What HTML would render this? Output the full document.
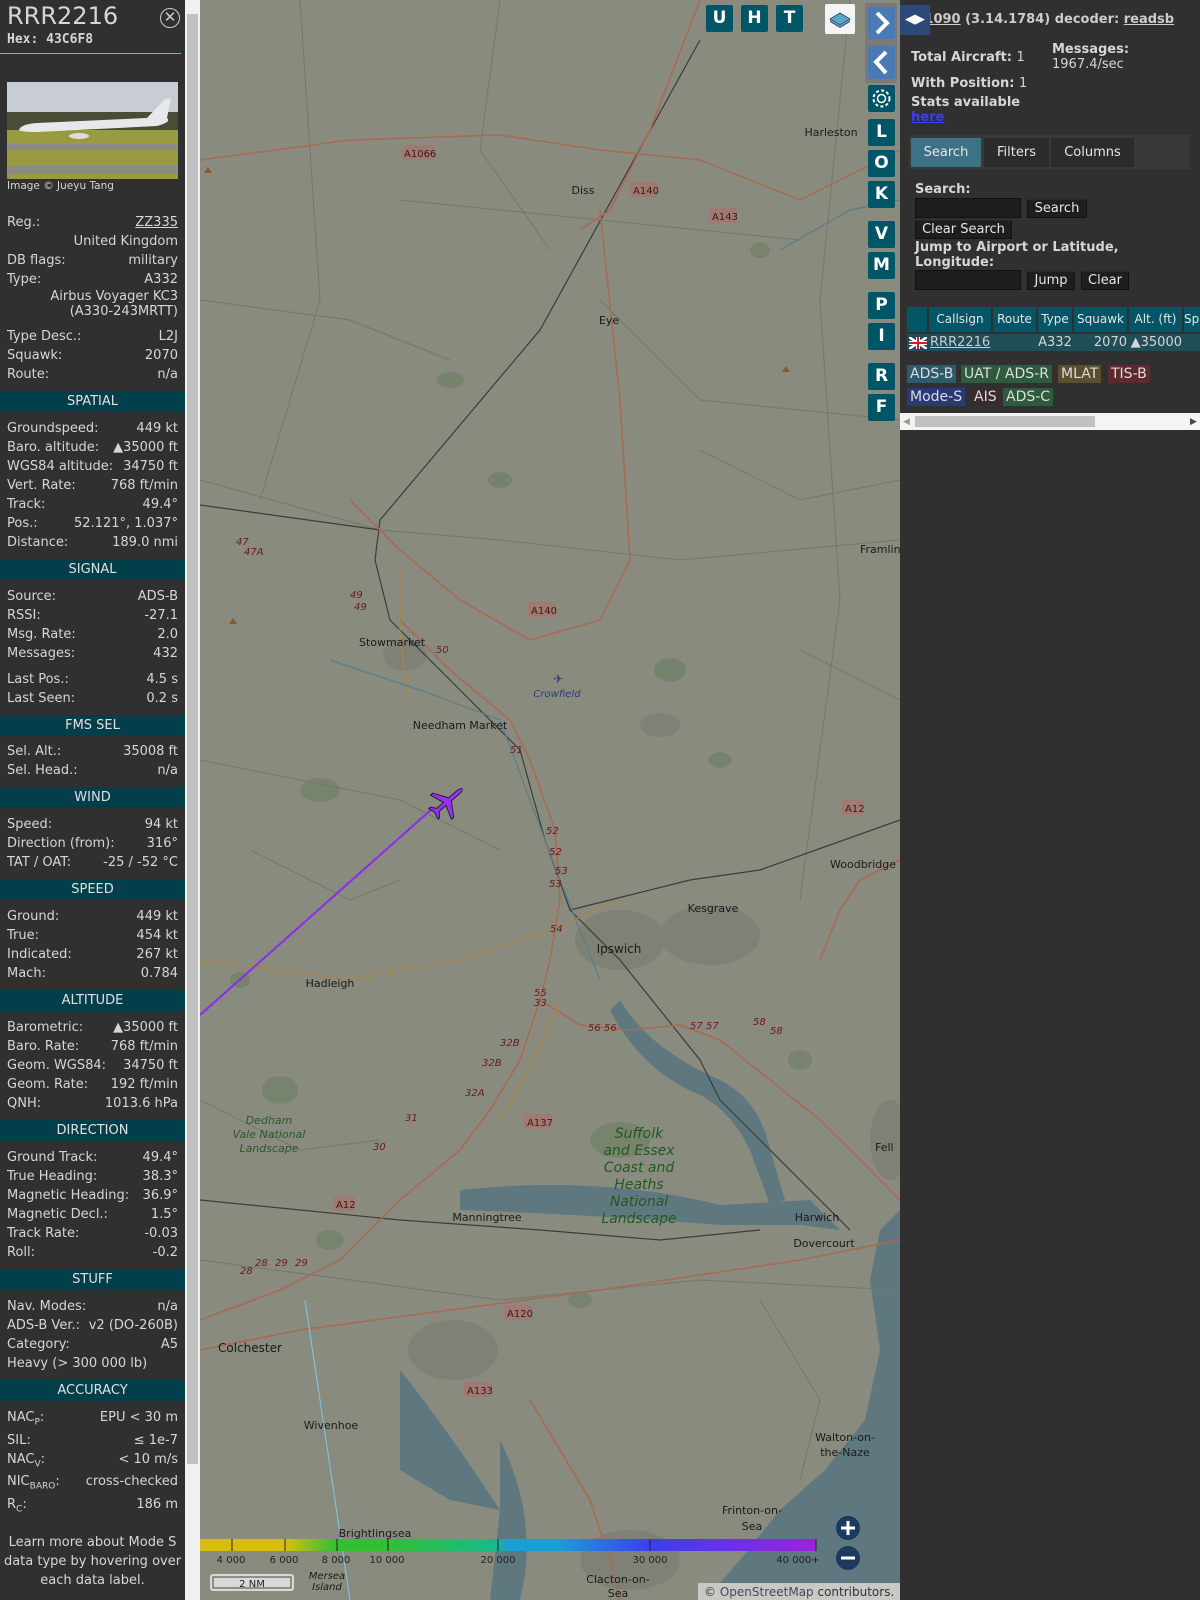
<!DOCTYPE html>
<html><head><meta charset="utf-8"><style>
*{margin:0;padding:0;box-sizing:border-box}
body{width:1200px;height:1600px;overflow:hidden;background:#303030;font-family:"DejaVu Sans","Liberation Sans",sans-serif;position:relative}
#left{position:absolute;left:0;top:0;width:185px;height:1600px;background:#303030;color:#d6d6d6;font-size:13px}
#sb{position:absolute;left:185px;top:0;width:15px;height:1600px;background:#f0f0f0}
#sbt{position:absolute;left:187px;top:14px;width:11px;height:1450px;background:#c1c1c1}
.t{position:absolute;left:7px;top:2px;font-size:24px;color:#d6d6d6}
.hx{position:absolute;left:7px;top:32px;font:bold 13px "DejaVu Sans Mono",monospace;color:#d6d6d6}
.cl{position:absolute;left:160px;top:8px;width:20px;height:20px;border:1.5px solid #ccc;border-radius:50%;color:#ccc;text-align:center;line-height:17px;font-size:15px}
.hl{position:absolute;left:0;top:53px;width:181px;height:1px;background:#6cb7d5}
.row{position:absolute;left:7px;width:171px;height:19px;line-height:19px;display:flex;justify-content:space-between;white-space:nowrap}
.hd{position:absolute;left:0;width:185px;height:21px;line-height:21px;background:#033e4b;text-align:center;color:#e0e0e0;font-size:13px}
#map{position:absolute;left:200px;top:0;width:700px;height:1600px;overflow:hidden;background:#898b7f}
.mb{position:absolute;width:27px;height:27px;background:#005566;color:#fff;font:bold 17px "DejaVu Sans",sans-serif;text-align:center;line-height:27px;border-radius:2px}
#right{position:absolute;left:900px;top:0;width:300px;height:1600px;background:#303030;color:#d6d6d6;font-size:13px}
.b{font-weight:bold}
.btn{position:absolute;height:19px;background:#1e1e1e;border:1px solid #111;border-top-color:#2a2a2a;color:#e6e6e6;font-size:13px;line-height:17px;text-align:center}
.inp{position:absolute;height:20px;background:#1e1e1e;border:1px solid #111}
.th{position:absolute;top:307px;height:25px;background:#045565;color:#e6e6e6;font-size:12px;line-height:25px;text-align:center}
.tag{position:absolute;height:18px;line-height:18px;font-size:14px;padding:0 3px;color:#ddd}
</style></head><body>
<div id="left">
<div class="t">RRR2216</div>
<div class="hx">Hex: 43C6F8</div>
<div class="cl">✕</div>
<div class="hl"></div>
<svg style="position:absolute;left:7px;top:82px" width="171" height="97">
<rect width="171" height="40" fill="#c8ccd4"/><rect y="30" width="171" height="20" fill="#4a4c38"/>
<rect y="48" width="171" height="49" fill="#9a9a40"/><rect y="62" width="171" height="6" fill="#8a8a88"/><rect y="84" width="171" height="8" fill="#8a8a88"/>
<path d="M12 48 Q14 42 30 41 L140 36 L158 17 L164 16 L160 36 Q165 40 150 44 L30 50 Q14 50 12 48Z" fill="#e8e8ea"/>
<ellipse cx="72" cy="54" rx="10" ry="3" fill="#ddd"/>
</svg>
<div style="position:absolute;left:7px;top:180px;font-size:10.5px;color:#d6d6d6">Image © Jueyu Tang</div>
<div class="row" style="top:213px"><span>Reg.:</span><span style="text-decoration:underline">ZZ335</span></div>
<div class="row" style="top:232px"><span></span><span>United Kingdom</span></div>
<div class="row" style="top:251px"><span>DB flags:</span><span>military</span></div>
<div class="row" style="top:270px"><span>Type:</span><span>A332</span></div>
<div class="row" style="top:289px;line-height:15px;height:32px"><span></span><span style="text-align:right">Airbus Voyager KC3<br>(A330-243MRTT)</span></div>
<div class="row" style="top:327px"><span>Type Desc.:</span><span>L2J</span></div>
<div class="row" style="top:346px"><span>Squawk:</span><span>2070</span></div>
<div class="row" style="top:365px"><span>Route:</span><span>n/a</span></div>

<div class="hd" style="top:391px">SPATIAL</div>
<div class="row" style="top:419px"><span>Groundspeed:</span><span>449 kt</span></div>
<div class="row" style="top:438px"><span>Baro. altitude:</span><span>▲35000 ft</span></div>
<div class="row" style="top:457px"><span>WGS84 altitude:</span><span>34750 ft</span></div>
<div class="row" style="top:476px"><span>Vert. Rate:</span><span>768 ft/min</span></div>
<div class="row" style="top:495px"><span>Track:</span><span>49.4°</span></div>
<div class="row" style="top:514px"><span>Pos.:</span><span>52.121°, 1.037°</span></div>
<div class="row" style="top:533px"><span>Distance:</span><span>189.0 nmi</span></div>

<div class="hd" style="top:559px">SIGNAL</div>
<div class="row" style="top:587px"><span>Source:</span><span>ADS-B</span></div>
<div class="row" style="top:606px"><span>RSSI:</span><span>-27.1</span></div>
<div class="row" style="top:625px"><span>Msg. Rate:</span><span>2.0</span></div>
<div class="row" style="top:644px"><span>Messages:</span><span>432</span></div>
<div class="row" style="top:670px"><span>Last Pos.:</span><span>4.5 s</span></div>
<div class="row" style="top:689px"><span>Last Seen:</span><span>0.2 s</span></div>

<div class="hd" style="top:715px">FMS SEL</div>
<div class="row" style="top:742px"><span>Sel. Alt.:</span><span>35008 ft</span></div>
<div class="row" style="top:761px"><span>Sel. Head.:</span><span>n/a</span></div>

<div class="hd" style="top:787px">WIND</div>
<div class="row" style="top:815px"><span>Speed:</span><span>94 kt</span></div>
<div class="row" style="top:834px"><span>Direction (from):</span><span>316°</span></div>
<div class="row" style="top:853px"><span>TAT / OAT:</span><span>-25 / -52 °C</span></div>

<div class="hd" style="top:879px">SPEED</div>
<div class="row" style="top:907px"><span>Ground:</span><span>449 kt</span></div>
<div class="row" style="top:926px"><span>True:</span><span>454 kt</span></div>
<div class="row" style="top:945px"><span>Indicated:</span><span>267 kt</span></div>
<div class="row" style="top:964px"><span>Mach:</span><span>0.784</span></div>

<div class="hd" style="top:990px">ALTITUDE</div>
<div class="row" style="top:1018px"><span>Barometric:</span><span>▲35000 ft</span></div>
<div class="row" style="top:1037px"><span>Baro. Rate:</span><span>768 ft/min</span></div>
<div class="row" style="top:1056px"><span>Geom. WGS84:</span><span>34750 ft</span></div>
<div class="row" style="top:1075px"><span>Geom. Rate:</span><span>192 ft/min</span></div>
<div class="row" style="top:1094px"><span>QNH:</span><span>1013.6 hPa</span></div>

<div class="hd" style="top:1120px">DIRECTION</div>
<div class="row" style="top:1148px"><span>Ground Track:</span><span>49.4°</span></div>
<div class="row" style="top:1167px"><span>True Heading:</span><span>38.3°</span></div>
<div class="row" style="top:1186px"><span>Magnetic Heading:</span><span>36.9°</span></div>
<div class="row" style="top:1205px"><span>Magnetic Decl.:</span><span>1.5°</span></div>
<div class="row" style="top:1224px"><span>Track Rate:</span><span>-0.03</span></div>
<div class="row" style="top:1243px"><span>Roll:</span><span>-0.2</span></div>

<div class="hd" style="top:1269px">STUFF</div>
<div class="row" style="top:1297px"><span>Nav. Modes:</span><span>n/a</span></div>
<div class="row" style="top:1316px"><span>ADS-B Ver.:</span><span>v2 (DO-260B)</span></div>
<div class="row" style="top:1335px"><span>Category:</span><span>A5</span></div>
<div class="row" style="top:1354px"><span>Heavy (&gt; 300 000 lb)</span><span></span></div>

<div class="hd" style="top:1380px">ACCURACY</div>
<div class="row" style="top:1408px"><span>NAC<sub style="font-size:9px">P</sub>:</span><span>EPU &lt; 30 m</span></div>
<div class="row" style="top:1431px"><span>SIL:</span><span>≤ 1e-7</span></div>
<div class="row" style="top:1450px"><span>NAC<sub style="font-size:9px">V</sub>:</span><span>&lt; 10 m/s</span></div>
<div class="row" style="top:1472px"><span>NIC<sub style="font-size:9px">BARO</sub>:</span><span>cross-checked</span></div>
<div class="row" style="top:1495px"><span>R<sub style="font-size:9px">C</sub>:</span><span>186 m</span></div>
<div style="position:absolute;left:0;top:1533px;width:185px;text-align:center;line-height:19px;font-size:13px">Learn more about Mode S<br>data type by hovering over<br>each data label.</div>
</div>
<div id="sb"></div><div id="sbt"></div>

<div id="map">
<svg width="700" height="1600" style="position:absolute;left:0;top:0" font-family="DejaVu Sans, sans-serif">
<g fill="#6f8064" opacity=".7">
<ellipse cx="470" cy="670" rx="16" ry="12"/><ellipse cx="120" cy="790" rx="20" ry="12"/><ellipse cx="80" cy="1090" rx="18" ry="14"/><ellipse cx="420" cy="1140" rx="30" ry="18"/><ellipse cx="300" cy="480" rx="12" ry="8"/><ellipse cx="560" cy="250" rx="10" ry="8"/><ellipse cx="250" cy="380" rx="14" ry="8"/><ellipse cx="130" cy="1240" rx="14" ry="10"/><ellipse cx="600" cy="1060" rx="12" ry="10"/><ellipse cx="520" cy="760" rx="12" ry="8"/><ellipse cx="40" cy="980" rx="10" ry="8"/><ellipse cx="380" cy="1300" rx="12" ry="8"/>
</g>
<g fill="#7f8076">
<ellipse cx="205" cy="655" rx="22" ry="16"/><ellipse cx="253" cy="1350" rx="45" ry="30"/><ellipse cx="420" cy="940" rx="45" ry="30"/><ellipse cx="510" cy="935" rx="50" ry="30"/><ellipse cx="460" cy="725" rx="20" ry="12"/><ellipse cx="430" cy="1560" rx="50" ry="30"/><ellipse cx="690" cy="1140" rx="20" ry="40"/>
</g>
<g fill="#5f7880">
<path d="M700 1210 L680 1230 L670 1280 L680 1350 L665 1420 L625 1470 L580 1510 L540 1560 L505 1600 L700 1600Z"/>
<path d="M260 1190 Q400 1175 520 1205 L610 1200 L640 1230 L600 1225 L520 1225 Q400 1215 260 1210Z"/>
<path d="M420 1000 Q450 1050 520 1080 Q560 1100 570 1150 L585 1200 L570 1205 L550 1150 Q530 1110 500 1095 Q440 1070 410 1010Z"/>
<path d="M200 1370 Q240 1420 280 1480 L300 1510 L250 1500 L200 1470Z"/>
<path d="M300 1440 Q340 1520 320 1600 L290 1600 L300 1510Z"/>
</g>
<g fill="none" stroke="#75776b" stroke-width="1">
<path d="M0 480 L180 530 L300 540 L480 560 L700 540"/><path d="M100 0 L120 300 L60 500"/><path d="M650 0 L620 300 L640 600 L600 900"/><path d="M0 760 L200 800 L300 850"/><path d="M0 1260 L150 1280 L300 1300 L500 1280 L700 1290"/><path d="M400 300 L500 400 L700 420"/><path d="M200 200 L400 220 L600 240"/>
<path d="M0 300 L150 320 L250 360"/><path d="M300 0 L280 150 L350 250"/><path d="M500 450 L600 500 L700 480"/><path d="M50 850 L150 900 L200 880"/><path d="M600 650 L700 700"/><path d="M0 1100 L100 1150 L180 1140"/><path d="M560 1300 L620 1400 L600 1480"/>
</g>
<g fill="none" stroke="#3c3c3c" stroke-width="1.2">
<path d="M500 40 L340 330 L180 520 L175 560 L190 620 L250 680 L320 750 L345 840 L370 910 L420 960 L460 1010 L500 1060 L520 1100 L560 1140 L600 1180 L650 1230"/>
<path d="M0 505 L180 530"/><path d="M370 910 L430 895 L490 880 L560 870 L700 820"/><path d="M560 1230 L460 1240 L340 1230 L200 1220 L0 1200"/>
</g>
<g fill="none" stroke="#a86a52" stroke-width="1.6">
<path d="M500 0 L450 130 L410 210 L380 230"/><path d="M0 160 L150 140 L300 135 L400 150 L500 160 L600 200 L700 150"/>
<path d="M400 210 L420 400 L430 560 L400 620 L330 640 L260 600 L200 550 L150 500"/>
<path d="M200 620 L250 670 L310 720 L330 760 L355 830 L360 900 L350 960 L340 1000"/>
<path d="M340 1000 L380 1025 L430 1030 L480 1025 L520 1040 L570 1080 L620 1120 L700 1200"/>
<path d="M340 1000 L320 1060 L290 1110 L260 1150 L200 1200 L140 1260 L80 1290 L0 1320"/>
<path d="M700 860 L660 880 L640 910 L620 960"/><path d="M0 1350 L100 1330 L250 1310 L400 1290 L600 1260 L700 1240"/>
<path d="M330 1400 L360 1450 L390 1500 L410 1560 L420 1600"/>
</g>
<g fill="none" stroke="#a8864a" stroke-width="1.3">
<path d="M0 960 L150 980 L260 960 L350 930 L420 900"/><path d="M360 1000 L330 1070 L300 1120"/><path d="M200 570 L200 640 L210 700"/>
</g>
<g fill="none" stroke="#5a7e8a" stroke-width="1.2">
<path d="M130 660 L220 690 L300 720 L330 800 L360 880 L400 980"/><path d="M580 250 L650 210 L700 200"/>
</g>
<path d="M0 1015 L233 808" stroke="#8a2cf0" stroke-width="2" fill="none"/>
<path d="M105 1300 L150 1600" stroke="#7ec8e8" stroke-width="1" fill="none"/>
<g transform="translate(247,802) rotate(49)">
<path d="M0 -20 Q2 -20 2 -14 L2 -4 L16 5 L16 8 L2 3 L2 12 L7 16 L7 18 L0 16 L-7 18 L-7 16 L-2 12 L-2 3 L-16 8 L-16 5 L-2 -4 L-2 -14 Q-2 -20 0 -20Z" fill="#9a30f8" stroke="#222" stroke-width="1"/>
</g>
<path d="M582 372 l4 -6 l4 6z" fill="#8a5a2a"/><path d="M29 624 l4 -6 l4 6z" fill="#8a5a2a"/><path d="M4 173 l4 -6 l4 6z" fill="#8a5a2a"/>
<text x="353" y="683" fill="#2a3e7a" font-size="12">✈</text>
<g font-size="11" fill="#1a1a1a">
<text x="383" y="194" text-anchor="middle">Diss</text><text x="409" y="324" text-anchor="middle">Eye</text><text x="631" y="136" text-anchor="middle">Harleston</text>
<text x="192" y="646" text-anchor="middle">Stowmarket</text><text x="260" y="729" text-anchor="middle">Needham Market</text>
<text x="663" y="868" text-anchor="middle">Woodbridge</text><text x="513" y="912" text-anchor="middle">Kesgrave</text><text x="419" y="953" text-anchor="middle" font-size="12">Ipswich</text>
<text x="130" y="987" text-anchor="middle">Hadleigh</text><text x="287" y="1221" text-anchor="middle">Manningtree</text><text x="617" y="1221" text-anchor="middle">Harwich</text><text x="624" y="1247" text-anchor="middle">Dovercourt</text>
<text x="50" y="1352" text-anchor="middle" font-size="12">Colchester</text><text x="131" y="1429" text-anchor="middle">Wivenhoe</text>
<text x="645" y="1441" text-anchor="middle">Walton-on-</text><text x="645" y="1456" text-anchor="middle">the-Naze</text>
<text x="552" y="1514" text-anchor="middle">Frinton-on-</text><text x="552" y="1530" text-anchor="middle">Sea</text>
<text x="418" y="1583" text-anchor="middle">Clacton-on-</text><text x="418" y="1597" text-anchor="middle">Sea</text>
<text x="175" y="1537" text-anchor="middle">Brightlingsea</text><text x="660" y="553">Framlingham</text><text x="675" y="1151">Fell</text>
<text x="127" y="1579" text-anchor="middle" font-style="italic" font-size="10">Mersea</text><text x="127" y="1590" text-anchor="middle" font-style="italic" font-size="10">Island</text>
</g>
<text x="357" y="697" text-anchor="middle" fill="#2a3e7a" font-size="10" font-style="italic">Crowfield</text>
<g font-size="11" fill="#2a5a2a" font-style="italic" text-anchor="middle"><text x="69" y="1124">Dedham</text><text x="69" y="1138">Vale National</text><text x="69" y="1152">Landscape</text></g>
<g font-size="14" fill="#1f5a1f" font-style="italic" text-anchor="middle"><text x="439" y="1138">Suffolk</text><text x="439" y="1155">and Essex</text><text x="439" y="1172">Coast and</text><text x="439" y="1189">Heaths</text><text x="439" y="1206">National</text><text x="439" y="1223">Landscape</text></g>
<g font-size="10" fill="#3a1a1a">
<rect x="201" y="145" width="34" height="15" fill="#a07a70" rx="2"/><text x="204" y="157">A1066</text>
<rect x="430" y="182" width="28" height="15" fill="#a07a70" rx="2"/><text x="433" y="194">A140</text>
<rect x="509" y="208" width="28" height="15" fill="#a07a70" rx="2"/><text x="512" y="220">A143</text>
<rect x="328" y="602" width="28" height="15" fill="#a07a70" rx="2"/><text x="331" y="614">A140</text>
<rect x="324" y="1114" width="28" height="15" fill="#a07a70" rx="2"/><text x="327" y="1126">A137</text>
<rect x="133" y="1196" width="22" height="15" fill="#a07a70" rx="2"/><text x="136" y="1208">A12</text>
<rect x="304" y="1305" width="28" height="15" fill="#a07a70" rx="2"/><text x="307" y="1317">A120</text>
<rect x="264" y="1382" width="28" height="15" fill="#a07a70" rx="2"/><text x="267" y="1394">A133</text>
<rect x="642" y="800" width="22" height="15" fill="#a07a70" rx="2"/><text x="645" y="812">A12</text>
</g>
<g font-size="10" fill="#6a1a1a" font-style="italic">
<text x="150" y="598">49</text><text x="154" y="610">49</text><text x="236" y="653">50</text><text x="310" y="753">51</text><text x="346" y="834">52</text><text x="349" y="855">52</text><text x="355" y="874">53</text><text x="349" y="887">53</text><text x="350" y="932">54</text><text x="334" y="996">55</text><text x="334" y="1006">33</text><text x="388" y="1031">56</text><text x="404" y="1031">56</text><text x="490" y="1029">57</text><text x="506" y="1029">57</text><text x="553" y="1025">58</text><text x="570" y="1034">58</text><text x="300" y="1046">32B</text><text x="282" y="1066">32B</text><text x="265" y="1096">32A</text><text x="205" y="1121">31</text><text x="173" y="1150">30</text><text x="36" y="545">47</text><text x="44" y="555">47A</text><text x="40" y="1274">28</text><text x="55" y="1266">28</text><text x="75" y="1266">29</text><text x="95" y="1266">29</text>
</g>
<defs><linearGradient id="cb" x1="0" x2="1">
<stop offset="0" stop-color="#d6bd10"/><stop offset=".14" stop-color="#d6bd10"/><stop offset=".22" stop-color="#30c030"/><stop offset=".3" stop-color="#30c030"/><stop offset=".48" stop-color="#1ab88a"/><stop offset=".5" stop-color="#1a9ed8"/><stop offset=".58" stop-color="#1a9ed8"/><stop offset=".73" stop-color="#3a40e6"/><stop offset="1" stop-color="#a020e0"/></linearGradient></defs>
<rect x="0" y="1539" width="616" height="12" fill="url(#cb)"/>
<g stroke="#222" stroke-width="1"><path d="M32 1539v12M85 1539v12M137 1539v12M188 1539v12M298 1539v12M450 1539v12M616 1539v12"/></g>
<g font-size="10" fill="#222" text-anchor="middle"><text x="31" y="1563">4 000</text><text x="84" y="1563">6 000</text><text x="136" y="1563">8 000</text><text x="187" y="1563">10 000</text><text x="298" y="1563">20 000</text><text x="450" y="1563">30 000</text><text x="598" y="1563">40 000+</text></g>
<rect x="10" y="1574" width="84" height="17" fill="#d8d8d4" rx="3"/><rect x="13" y="1577" width="78" height="11" fill="none" stroke="#444"/>
<text x="52" y="1587" font-size="10" fill="#222" text-anchor="middle">2 NM</text>
<circle cx="648" cy="1528" r="12" fill="#1b3a5e"/><path d="M641 1528h14M648 1521v14" stroke="#fff" stroke-width="3"/>
<circle cx="648" cy="1558" r="12" fill="#1b3a5e"/><path d="M641 1558h14" stroke="#fff" stroke-width="3"/>
<rect x="498" y="1583" width="202" height="17" fill="#c8c8c4"/>
<text x="504" y="1596" font-size="12" fill="#333">© <tspan fill="#404a60">OpenStreetMap</tspan> contributors.</text>
</svg>
<div class="mb" style="left:506px;top:5px">U</div><div class="mb" style="left:541px;top:5px">H</div><div class="mb" style="left:576px;top:5px">T</div>
<div style="position:absolute;left:625px;top:4px;width:30px;height:30px;background:#f4f4f4;border-radius:2px">
<svg width="30" height="30"><path d="M15 9 L25 15 L15 21 L5 15Z" fill="#5aa6c8" stroke="#246" stroke-width=".8"/><path d="M5 16 L15 22 L25 16 L25 18 L15 24 L5 18Z" fill="#3a6a8a"/></svg></div>
<div style="position:absolute;left:665px;top:3px;width:32px;height:80px;background:#7a7a7a;border-radius:2px"></div>
<div class="mb" style="left:668px;top:7px;width:27px;height:32px;background:#4a7ab4"><svg width="27" height="32"><path d="M9 6 L19 16 L9 26" stroke="#fff" stroke-width="4" fill="none"/></svg></div>
<div class="mb" style="left:668px;top:46px;width:27px;height:33px;background:#4a7ab4"><svg width="27" height="33"><path d="M18 6 L8 16 L18 27" stroke="#fff" stroke-width="4" fill="none"/></svg></div>
<div class="mb" style="left:668px;top:85px"><svg width="27" height="27"><circle cx="13.5" cy="13.5" r="4" fill="none" stroke="#fff" stroke-width="1.5"/><circle cx="13.5" cy="13.5" r="8" fill="none" stroke="#fff" stroke-width="2" stroke-dasharray="3 2.3"/></svg></div>
<div class="mb" style="left:668px;top:119px">L</div><div class="mb" style="left:668px;top:150px">O</div><div class="mb" style="left:668px;top:181px">K</div>
<div class="mb" style="left:668px;top:221px">V</div><div class="mb" style="left:668px;top:252px">M</div>
<div class="mb" style="left:668px;top:292px">P</div><div class="mb" style="left:668px;top:323px">I</div>
<div class="mb" style="left:668px;top:363px">R</div><div class="mb" style="left:668px;top:394px">F</div>
</div>

<div id="right">
<div style="position:absolute;left:3px;top:12px;white-space:nowrap;font-weight:bold;font-size:13px;color:#ccc"><span style="text-decoration:underline">tar1090</span> (3.14.1784) decoder: <span style="text-decoration:underline">readsb</span></div>
<div style="position:absolute;left:0;top:5px;width:30px;height:30px;background:#2c4a78;color:#fff;font-size:13px;line-height:30px;text-align:center">◀▶</div>
<div class="b" style="position:absolute;left:11px;top:50px">Total Aircraft: <span style="font-weight:normal">1</span></div>
<div class="b" style="position:absolute;left:152px;top:42px">Messages:</div>
<div style="position:absolute;left:152px;top:57px">1967.4/sec</div>
<div class="b" style="position:absolute;left:11px;top:76px">With Position: <span style="font-weight:normal">1</span></div>
<div class="b" style="position:absolute;left:11px;top:95px">Stats available</div>
<div class="b" style="position:absolute;left:11px;top:110px;color:#3c3cff;text-decoration:underline">here</div>
<div style="position:absolute;left:9px;top:135px;width:281px;height:34px;background:#393939"></div>
<div style="position:absolute;left:11px;top:138px;width:70px;height:29px;background:#3d7286;color:#e6e6e6;text-align:center;line-height:29px">Search</div>
<div style="position:absolute;left:84px;top:138px;width:65px;height:29px;background:#2b2b2b;color:#e6e6e6;text-align:center;line-height:29px">Filters</div>
<div style="position:absolute;left:151px;top:138px;width:83px;height:29px;background:#2b2b2b;color:#e6e6e6;text-align:center;line-height:29px">Columns</div>
<div class="b" style="position:absolute;left:15px;top:182px">Search:</div>
<div class="inp" style="left:15px;top:198px;width:106px"></div>
<div class="btn" style="left:127px;top:199px;width:60px">Search</div>
<div class="btn" style="left:15px;top:220px;width:97px">Clear Search</div>
<div class="b" style="position:absolute;left:15px;top:240px;line-height:15px">Jump to Airport or Latitude,<br>Longitude:</div>
<div class="inp" style="left:15px;top:270px;width:106px"></div>
<div class="btn" style="left:127px;top:271px;width:48px">Jump</div>
<div class="btn" style="left:181px;top:271px;width:48px">Clear</div>
<div class="th" style="left:7px;width:20px"></div>
<div class="th" style="left:29px;width:62px">Callsign</div>
<div class="th" style="left:93px;width:43px">Route</div>
<div class="th" style="left:138px;width:34px">Type</div>
<div class="th" style="left:174px;width:53px">Squawk</div>
<div class="th" style="left:229px;width:53px">Alt. (ft)</div>
<div class="th" style="left:284px;width:16px;text-align:left">Sp</div>
<div style="position:absolute;left:7px;top:334px;width:293px;height:17px;background:#1f4d58"></div>
<div style="position:absolute;left:9px;top:337px;width:18px;height:12px;background:#2a3a8a"><svg width="18" height="12"><path d="M0 0L18 12M18 0L0 12" stroke="#fff" stroke-width="2.5"/><path d="M9 0v12M0 6h18" stroke="#fff" stroke-width="4"/><path d="M9 0v12M0 6h18" stroke="#c22" stroke-width="2"/></svg></div>
<div style="position:absolute;left:30px;top:334px;line-height:17px;color:#ccc;text-decoration:underline">RRR2216</div>
<div style="position:absolute;left:138px;top:334px;width:34px;line-height:17px;text-align:center">A332</div>
<div style="position:absolute;left:174px;top:334px;width:53px;line-height:17px;text-align:right">2070</div>
<div style="position:absolute;left:229px;top:334px;width:53px;line-height:17px;text-align:right">▲35000</div>
<div class="tag" style="left:7px;top:365px;background:#2e5a6c">ADS-B</div>
<div class="tag" style="left:61px;top:365px;background:#2e5a3e">UAT / ADS-R</div>
<div class="tag" style="left:158px;top:365px;background:#5a4e2e">MLAT</div>
<div class="tag" style="left:208px;top:365px;background:#5e2a30">TIS-B</div>
<div class="tag" style="left:7px;top:388px;background:#2a3a78">Mode-S</div>
<div class="tag" style="left:71px;top:388px;background:#3a2c2c">AIS</div>
<div class="tag" style="left:103px;top:388px;background:#2e5a3e">ADS-C</div>
<div style="position:absolute;left:0;top:413px;width:300px;height:17px;background:#f4f4f4"></div>
<div style="position:absolute;left:15px;top:416px;width:180px;height:11px;background:#c1c1c1"></div>
<div style="position:absolute;left:3px;top:417px;font-size:9px;color:#999">◀</div>
<div style="position:absolute;left:290px;top:417px;font-size:9px;color:#444">▶</div>
</div>
</body></html>
